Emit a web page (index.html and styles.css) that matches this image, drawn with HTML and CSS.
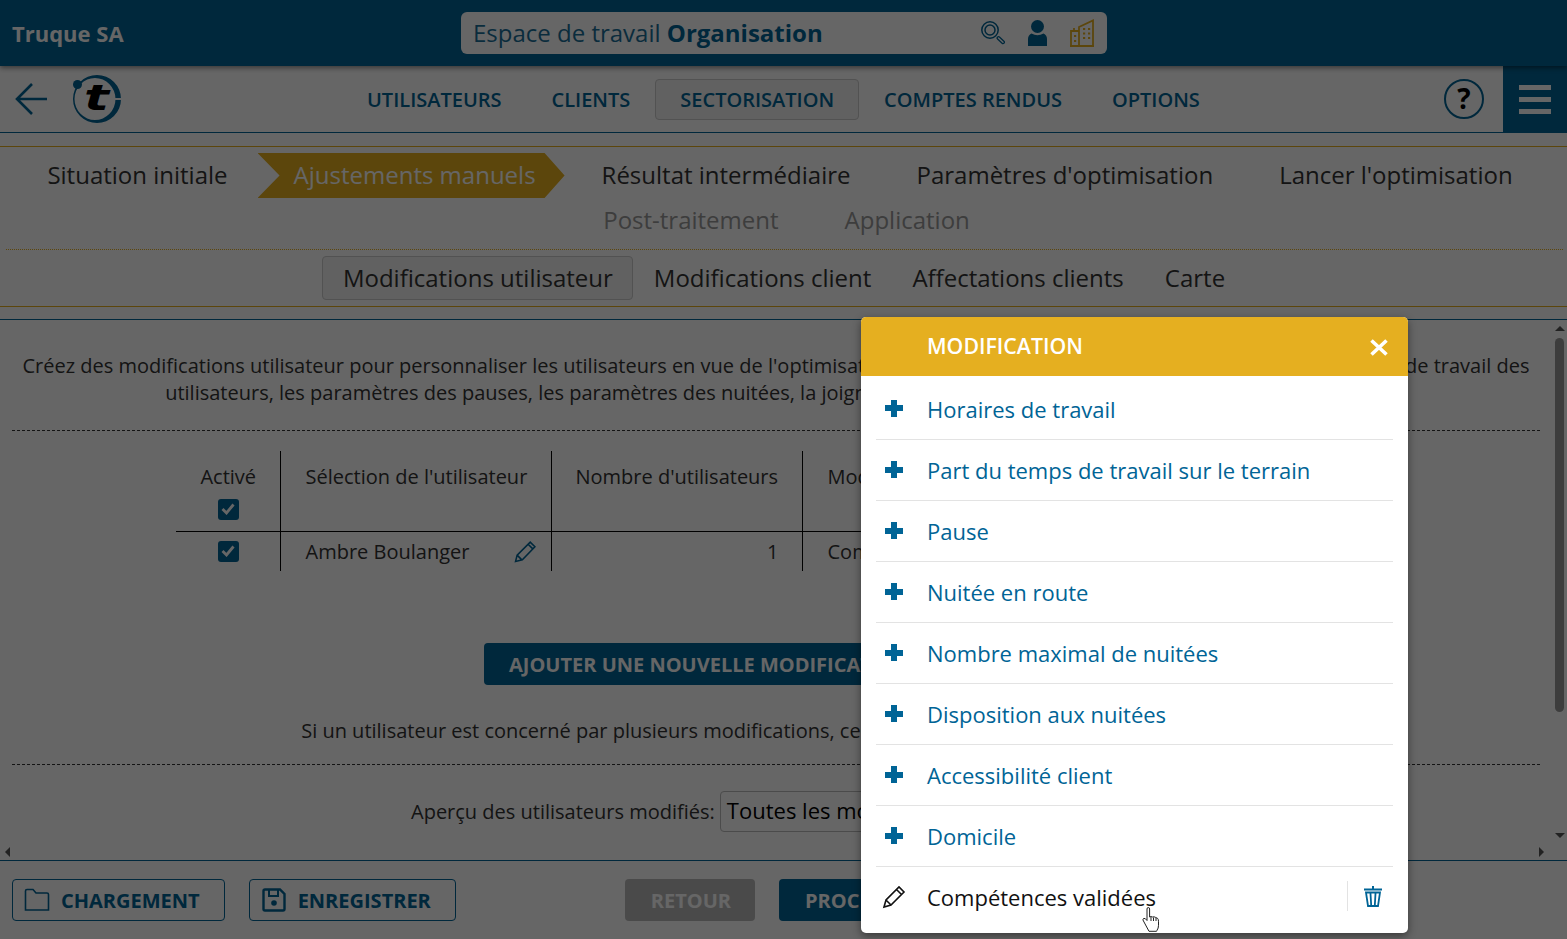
FILE: index.html
```html
<!DOCTYPE html>
<html lang="fr">
<head>
    <meta charset="UTF-8">
    <title>Truque SA</title>
    <link rel="stylesheet" href="styles.css">
</head>
<body>
    <header class="topbar">
        <div class="company">Truque SA</div>
        <div class="workspace">
            <span class="workspace-label">Espace de travail <strong>Organisation</strong></span>
            <span class="workspace-icons">
                <svg width="24" height="24" viewBox="0 0 24 24" fill="none" stroke="#006496" stroke-width="1.500"><circle cx="9" cy="9" r="8.200"/><circle cx="9" cy="9" r="5"/><path d="M17.500 17l4.500 4.200" stroke-width="4" stroke-linecap="round"/><path d="M17.500 17l4.500 4.200" stroke="#fff" stroke-width="1.400" stroke-linecap="round"/></svg>
                <svg width="19" height="26" viewBox="0 0 19 26" fill="#006496"><circle cx="9.500" cy="6.500" r="6.500"/><path d="M0 26v-7q0-4 3.500-5.500q6 3.500 12 0q3.500 1.500 3.500 5.500v7z"/></svg>
                <svg width="24" height="28" viewBox="0 0 24 28" fill="none" stroke="#e5af20" stroke-width="1.800"><path d="M9 27V8L23 1.500V27zM1 27V12h8M0 27h24M4 12V9"/><path d="M13 10h2.200M18 10h2.200M13 14.500h2.200M18 14.500h2.200M13 19h2.200M18 19h2.200M4 17h2.200M4 22h2.200" stroke-width="2.200"/></svg>
            </span>
        </div>
    </header>

    <nav class="mainnav">
        <svg class="back" width="36" height="34" viewBox="0 0 36 34" fill="none" stroke="#006496" stroke-width="2.600"><path d="M33 17H3M18 2L3 17l15 15"/></svg>
        <svg class="logo" width="50" height="50" viewBox="0 0 50 50"><path fill-rule="evenodd" fill="#006496" d="M25 1a24 24 0 1 1 0 48a24 24 0 1 1 0-48zM23 4a20.500 21 0 1 0 0 42a20.500 21 0 1 0 0-42z"/><path d="M38 25h12" stroke="#fff" stroke-width="2"/><circle cx="5.500" cy="10.500" r="4.500" fill="#006496"/></svg>
        <span class="logo-t">t</span>
        <div class="navlinks">
            <a>UTILISATEURS</a>
            <a>CLIENTS</a>
            <a class="active">SECTORISATION</a>
            <a>COMPTES RENDUS</a>
            <a>OPTIONS</a>
        </div>
        <div class="help">?</div>
        <div class="burger"><i></i><i></i><i></i></div>
    </nav>

    <section class="steps">
        <div class="steprow first">
            <span class="step">Situation initiale</span>
            <span class="step current">Ajustements manuels</span>
            <span class="step">Résultat intermédiaire</span>
            <span class="step">Paramètres d'optimisation</span>
            <span class="step">Lancer l'optimisation</span>
        </div>
        <div class="steprow second">
            <span class="step muted">Post-traitement</span>
            <span class="step muted">Application</span>
        </div>
    </section>

    <section class="subtabs">
        <span class="subtab active">Modifications utilisateur</span>
        <span class="subtab">Modifications client</span>
        <span class="subtab">Affectations clients</span>
        <span class="subtab">Carte</span>
    </section>

    <main class="content">
        <p class="intro">Créez des modifications utilisateur pour personnaliser les utilisateurs en vue de l'optimisation. Vous pouvez ainsi notamment y modifier les horaires de travail des<br>utilisateurs, les paramètres des pauses, les paramètres des nuitées, la joignabilité des clients, les temps de travail sur le terrain, etc.</p>
        <hr class="dash">
        <table class="mods">
            <tr class="head">
                <th class="col-active">Activé<span class="check"><svg width="14" height="12" viewBox="0 0 14 12" fill="none" stroke="#fff" stroke-width="2.800"><path d="M1.500 6l4 4 7-8.500"/></svg></span></th>
                <th class="col-user">Sélection de l'utilisateur</th>
                <th class="col-count">Nombre d'utilisateurs</th>
                <th class="col-mod">Modification</th>
            </tr>
            <tr>
                <td class="col-active"><span class="check"><svg width="14" height="12" viewBox="0 0 14 12" fill="none" stroke="#fff" stroke-width="2.800"><path d="M1.500 6l4 4 7-8.500"/></svg></span></td>
                <td class="col-user"><div class="usercell">Ambre Boulanger
                    <svg width="23" height="23" viewBox="0 0 22 22" fill="none" stroke="#006496" stroke-width="1.500"><path d="M1.500 20.500l1.500-6L15.500 2l4.500 4.500L8 19zM3 14.500L7.500 19M13.500 4l4.500 4.500"/></svg></div></td>
                <td class="col-count num">1</td>
                <td class="col-mod">Compétences validées</td>
            </tr>
        </table>
        <div class="addrow"><button class="add">AJOUTER UNE NOUVELLE MODIFICATION UTILISATEUR</button></div>
        <p class="note">Si un utilisateur est concerné par plusieurs modifications, celles-ci sont appliquées dans l'ordre affiché</p>
        <hr class="dash second">
        <div class="preview">
            <label>Aperçu des utilisateurs modifiés:</label>
            <span class="select">Toutes les modifications</span>
        </div>
        <div class="vthumb"></div>
        <i class="arrow up"></i>
        <i class="arrow down"></i>
        <i class="arrow left"></i>
        <i class="arrow right"></i>
    </main>

    <footer class="actions">
        <button class="outline">
            <svg width="26" height="24" viewBox="0 0 26 24" fill="none" stroke="#006496" stroke-width="1.600"><path d="M1.500 22V3q0-1.500 1.500-1.500h6L12 5h11q1.500 0 1.500 1.500V22z"/></svg>
            CHARGEMENT</button>
        <button class="outline">
            <svg width="26" height="24" viewBox="0 0 26 24" fill="none" stroke="#006496" stroke-width="2.400"><path d="M2.500 3q0-1.500 1.500-1.500h15L23.500 6v15q0 1.500-1.500 1.500H4q-1.500 0-1.500-1.500z"/><path d="M8 2v6h9V2" stroke-width="2"/><circle cx="13" cy="15" r="2.800" fill="#006496" stroke="none"/></svg>
            ENREGISTRER</button>
        <button class="solid disabled">RETOUR</button>
        <button class="solid">PROCHAIN</button>
    </footer>

    <div class="backdrop"></div>

    <aside class="modal">
        <div class="modal-head">MODIFICATION<span class="close">
            <svg width="18" height="17" viewBox="0 0 18 17" stroke="#fff" stroke-width="3.600"><path d="M1.500 1.500l15 14M16.500 1.500l-15 14"/></svg></span></div>
        <ul class="modal-list">
            <li><i class="plus"></i>Horaires de travail</li>
            <li><i class="plus"></i>Part du temps de travail sur le terrain</li>
            <li><i class="plus"></i>Pause</li>
            <li><i class="plus"></i>Nuitée en route</li>
            <li><i class="plus"></i>Nombre maximal de nuitées</li>
            <li><i class="plus"></i>Disposition aux nuitées</li>
            <li><i class="plus"></i>Accessibilité client</li>
            <li><i class="plus"></i>Domicile</li>
            <li class="done">
                <svg class="pencil" width="24" height="24" viewBox="0 0 24 24" fill="none" stroke="#111" stroke-width="1.600"><path d="M2 22l2-7L17 2l5 5L9 20zM4 15l5 5M14.500 4.500l5 5"/></svg>
                Compétences validées
                <span class="trash">
                    <svg width="18" height="21" viewBox="0 0 18 21" fill="none" stroke="#006496" stroke-width="1.800"><path d="M0 3.500h18" stroke-width="2.200"/><path d="M9 0v3" stroke-width="2"/><path d="M2 6.500L4 20h10l2-13.500zM6.500 7.500l.7 12M11.500 7.500l-.7 12"/></svg>
                </span>
            </li>
        </ul>
    </aside>
    <svg class="cursor" width="18" height="25" viewBox="0 0 18 25" fill="#fff" stroke="#222" stroke-width="1"><path d="M5 2q0-1.500 1.300-1.500T7.600 2v8l1.500-.5 1.500.5 1.500-.2 1.700.7 1.700.8q1 1 1 3v4q0 3-1.500 5l-.5 1H7L2 15q-2-2.500-.5-3.500t3.500 2z"/><path d="M9 10v4M11.500 10.500v3.500M14 11v3" fill="none"/></svg>
</body>
</html>
```

FILE: styles.css
```css
* { box-sizing: border-box; }
html, body { height: 100%; }
body {
    margin: 0;
    height: 939px;
    overflow: hidden;
    position: relative;
    font-family: "Open Sans", sans-serif;
    color: #333;
    background: #fff;
    display: flex;
    flex-direction: column;
}

/* top bar */
.topbar {
    height: 66px;
    background: #006496;
    display: flex;
    align-items: center;
    padding: 0 0 0 12px;
    position: relative;
    z-index: 1;
    flex: none;
    box-shadow: 0 2px 5px rgba(0, 0, 0, 0.45);
}
.company { color: #fff; font-size: 22px; font-weight: 700; width: 449px; }
.workspace {
    width: 646px;
    height: 42px;
    background: #fff;
    border-radius: 6px;
    display: flex;
    align-items: center;
    justify-content: space-between;
    padding: 0 13px 0 12px;
}
.workspace-label { font-size: 24px; color: #1b6f98; margin-bottom: 2px; }
.workspace-label strong { color: #006496; }
.workspace-icons { display: flex; align-items: center; gap: 23px; }
.workspace-icons svg { display: block; }

/* main nav */
.mainnav {
    height: 67px;
    flex: none;
    display: flex;
    align-items: center;
    border-bottom: 1px solid #006496;
    position: relative;
    padding-left: 14px;
}
.back { flex: none; }
.logo { flex: none; margin-left: 22px; }
.logo-t {
    position: absolute;
    left: 84px;
    top: 14px;
    font: italic 700 36px/36px "DejaVu Sans", sans-serif;
    color: #000;
    transform: scaleX(1.45);
    transform-origin: left center;
}
.navlinks {
    position: absolute;
    left: 342px;
    top: 13px;
    display: flex;
    align-items: center;
    gap: 0;
}
.navlinks a {
    font-size: 20px;
    font-weight: 600;
    color: #006496;
    padding: 0 24px;
    height: 41px;
    line-height: 39px;
    border: 1px solid transparent;
    border-radius: 4px;
}
.navlinks a.active { background: #f2f2f2; border-color: #ccc; }
.help {
    margin-left: auto;
    width: 40px;
    height: 40px;
    border: 2px solid #006496;
    border-radius: 50%;
    text-align: center;
    font-size: 28px;
    line-height: 35px;
    font-weight: 700;
    color: #000;
}
.burger {
    width: 64px;
    height: 66px;
    margin-left: 19px;
    background: #006496;
    display: flex;
    flex-direction: column;
    justify-content: center;
    gap: 7px;
    padding: 0 16px;
}
.burger i { display: block; height: 5px; background: #fff; }

/* workflow steps */
.steps {
    margin-top: 13px;
    height: 104px;
    border-top: 1px solid #e5af20;
    flex: none;
    padding-top: 6px;
    position: relative;
}
.steps::after {
    content: "";
    position: absolute;
    left: 6px;
    right: 4px;
    bottom: 0;
    border-bottom: 1px dotted #e5af20;
}
.steprow { display: flex; justify-content: center; height: 45px; }
.steprow.first { padding-right: 7px; }
.steprow.second { padding-left: 6px; }
.step {
    font-size: 24px;
    line-height: 44px;
    padding: 0 33px;
    color: #333;
    white-space: nowrap;
}
.step.current {
    background: #e5af20;
    color: #fff;
    padding: 0 29px 0 36px;
    margin: 0 4px 0 -3px;
    clip-path: polygon(0 0, calc(100% - 20px) 0, 100% 50%, calc(100% - 20px) 100%, 0 100%, 22px 50%);
}
.step.muted { color: #999; }

/* sub tabs */
.subtabs {
    height: 57px;
    flex: none;
    display: flex;
    justify-content: center;
    align-items: flex-start;
    padding: 6px 0 0 0;
    border-bottom: 1px solid #e5af20;
}
.subtab {
    font-size: 24px;
    line-height: 42px;
    padding: 0 19.5px;
    border: 1px solid transparent;
    border-radius: 4px;
}
.subtab.active { background: #f2f2f2; border-color: #ccc; margin-left: 1px; }

/* scrolling content */
.content {
    margin-top: 12px;
    height: 542px;
    flex: none;
    border-top: 1px solid #006496;
    border-bottom: 1px solid #006496;
    position: relative;
    padding: 32px 27px 0 12px;
    overflow: hidden;
}
.intro {
    margin: 0;
    font-size: 20px;
    line-height: 27px;
    text-align: center;
    white-space: nowrap;
}
.dash { border: 0; border-top: 1px dashed #333; margin: 24px 0 0; }
.dash.second { margin-top: 20px; }
.mods {
    border-collapse: collapse;
    table-layout: fixed;
    width: 1200px;
    margin: 20px 0 0 164px;
    font-size: 20px;
}
.mods th, .mods td {
    font-weight: 400;
    border-right: 1px solid #000;
    padding: 0 24px;
    text-align: left;
    vertical-align: middle;
    white-space: nowrap;
}
.mods th:last-child, .mods td:last-child { border-right: 0; padding-left: 25px; }
.mods .head th { height: 80px; border-bottom: 1px solid #000; vertical-align: top; padding-top: 12px; }
.mods td { height: 40px; }
.mods .col-active { width: 104px; text-align: center; padding: 0 0 0 1px; }
.mods .col-user { width: 271px; padding: 0 14px 0 25px; }
.mods .col-count { width: 251px; }
.mods .num { text-align: right; padding-right: 23px; }
.usercell { display: flex; justify-content: space-between; align-items: center; }
.check {
    display: block;
    width: 21px;
    height: 21px;
    margin: 9px auto 0;
    background: #006496;
    border-radius: 3px;
    text-align: center;
    line-height: 18px;
}
td .check { margin-top: 0; }
.addrow { margin-top: 72px; padding-left: 472px; }
.add {
    width: 584px;
    height: 42px;
    border: 0;
    border-radius: 4px;
    background: #006496;
    color: #fff;
    font: 700 20px "Open Sans", sans-serif;
    padding: 0 25px;
    text-align: left;
    white-space: nowrap;
}
.note { margin: 32px 0 0; font-size: 20px; line-height: 27px; text-align: center; white-space: nowrap; }
.preview {
    margin-top: 26px;
    display: flex;
    align-items: center;
    padding-left: 399px;
    gap: 5px;
    font-size: 20px;
}
.select {
    width: 400px;
    height: 41px;
    border: 1px solid #bbb;
    border-radius: 4px;
    padding-left: 6px;
    font-size: 22px;
    line-height: 37px;
    color: #000;
}
.vthumb {
    position: absolute;
    right: 3px;
    top: 18px;
    width: 9px;
    height: 374px;
    border-radius: 5px;
    background: #999;
}
.arrow { position: absolute; width: 0; height: 0; border: 5px solid transparent; }
.arrow.up { right: 2px; top: 1px; border-bottom-color: #555; }
.arrow.down { right: 2px; top: 513px; border-top-color: #555; }
.arrow.left { left: 0; top: 527px; border-right-color: #555; }
.arrow.right { right: 18px; top: 527px; border-left-color: #555; }

/* footer */
.actions {
    flex: 1;
    display: flex;
    align-items: center;
    padding: 0 0 0 12px;
    gap: 24px;
}
.actions button {
    height: 42px;
    border-radius: 4px;
    font: 700 20px "Open Sans", sans-serif;
    white-space: nowrap;
    display: flex;
    align-items: center;
}
.outline { background: #fff; border: 1px solid #006496; color: #006496; padding: 0 24px 0 11px; gap: 11px; }
.solid { background: #006496; border: 0; color: #fff; padding: 0 24px 0 26px; }
.solid.disabled { background: #b9b9b9; margin-left: 145px; }

/* backdrop + dialog */
.backdrop { position: absolute; inset: 0; z-index: 2; background: rgba(0, 0, 0, 0.6); }
.modal {
    position: absolute;
    z-index: 3;
    left: 861px;
    top: 317px;
    width: 547px;
    height: 616px;
    background: #fff;
    border-radius: 5px;
    box-shadow: 0 3px 8px rgba(0, 0, 0, 0.45);
    overflow: hidden;
}
.modal-head {
    height: 59px;
    background: #e5af20;
    color: #fff;
    font-size: 21.3px;
    font-weight: 600;
    line-height: 57px;
    padding-left: 66px;
    position: relative;
}
.close { position: absolute; right: 20px; top: 22px; height: 17px; display: flex; }
.modal-list { list-style: none; margin: 0; padding: 0 15px; }
.modal-list li {
    height: 61px;
    border-bottom: 1px solid #e3e3e3;
    display: flex;
    align-items: center;
    font-size: 22px;
    color: #006496;
    padding-left: 51px;
    position: relative;
}
.modal-list li:first-child { height: 64px; padding-top: 2px; }
.modal-list li:last-child { border-bottom: 0; padding-bottom: 2px; }
.plus { position: absolute; left: 9px; top: 50%; margin-top: -9px; width: 18px; height: 17px; background:
    linear-gradient(#006496, #006496) center / 100% 6px no-repeat,
    linear-gradient(#006496, #006496) center / 6px 100% no-repeat; }
.modal-list li:first-child .plus { margin-top: -8px; }
.modal-list li.done { color: #111; }
.pencil { position: absolute; left: 6px; top: 18px; }
.trash {
    position: absolute;
    right: 0;
    top: 14px;
    height: 30px;
    width: 46px;
    padding-left: 5px;
    border-left: 1px solid #e3e3e3;
    display: flex;
    align-items: center;
    justify-content: center;
}
.cursor { position: absolute; z-index: 4; left: 1142px; top: 907px; }
```
